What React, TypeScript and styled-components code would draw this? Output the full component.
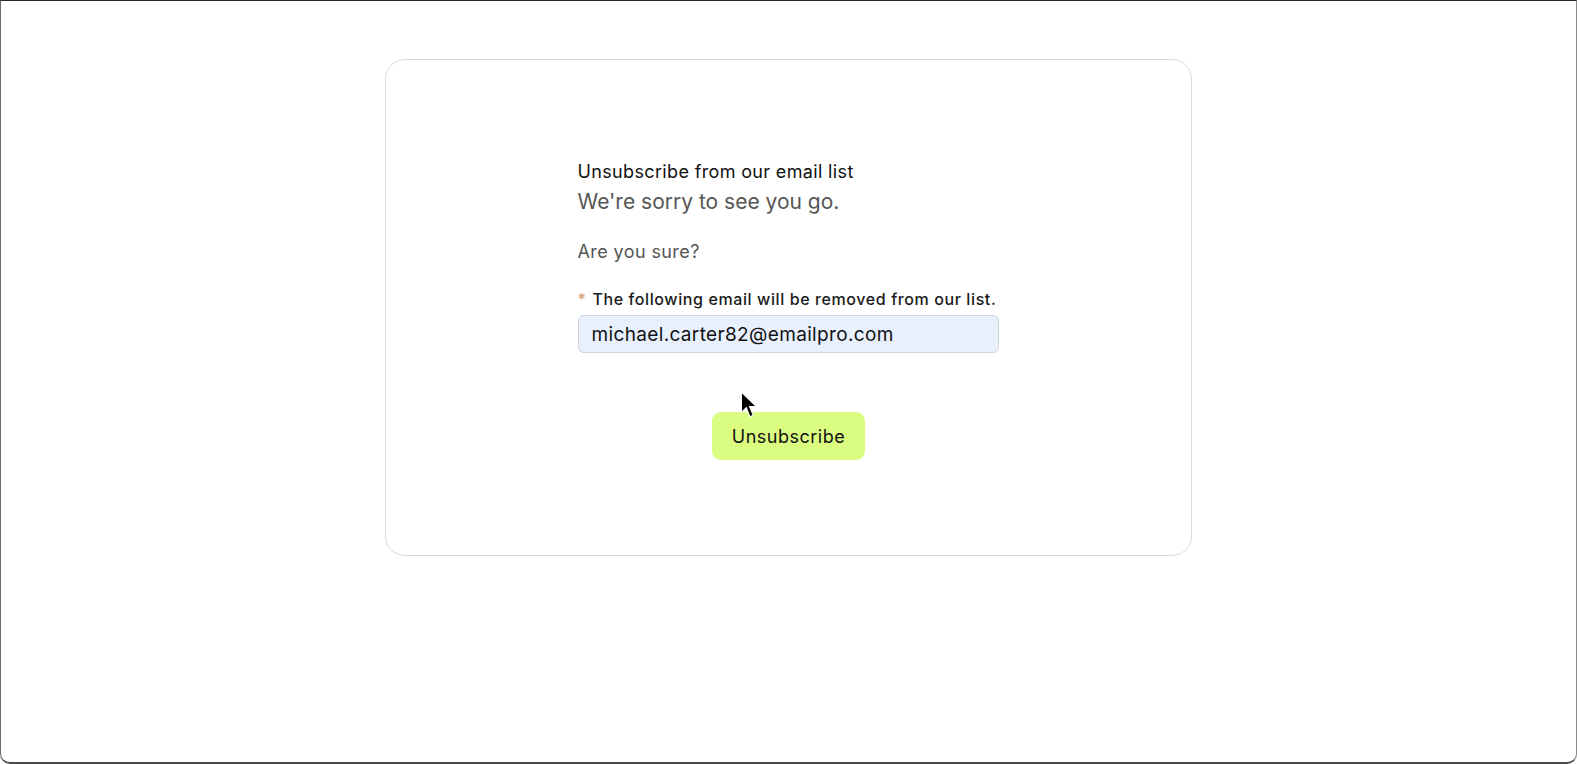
import React, { FC } from 'react';
import styled, { createGlobalStyle } from 'styled-components';

const GlobalStyle = createGlobalStyle`
  html, body {
    margin: 0;
    padding: 0;
    background: #ffffff;
  }
  body {
    font-family: Inter, "Noto Sans", "Liberation Sans", sans-serif;
  }
`;

const Frame = styled.div`
  position: relative;
  box-sizing: border-box;
  height: 764px;
  border-top: 1px solid #2b2b2b;
  border-right: 1px solid #8a8a8a;
  border-bottom: 2px solid #4a4a4a;
  border-left: 1px solid #6a6a6a;
  border-radius: 0 0 10px 10px;
  background: #ffffff;
  overflow: hidden;
`;

const Card = styled.div`
  box-sizing: border-box;
  width: 807px;
  height: 497px;
  margin: 58px auto 0 auto;
  padding-top: 100px;
  border: 1px solid #d9d9d9;
  border-radius: 20px;
`;

const Column = styled.div`
  width: 422px;
  margin: 0 auto;
  display: flex;
  flex-direction: column;
`;

const Title = styled.h1`
  margin: 0;
  font-size: 18px;
  font-weight: 400;
  line-height: 24px;
  letter-spacing: 0.35px;
  color: #111111;
`;

const Subtitle = styled.p`
  margin: 5px 0 0 0;
  font-size: 21px;
  font-weight: 400;
  line-height: 26px;
  color: #555555;
`;

const Question = styled.p`
  margin: 26px 0 0 0;
  font-size: 18px;
  line-height: 22px;
  letter-spacing: 0.4px;
  color: #555555;
`;

const Label = styled.label`
  margin-top: 26px;
  font-size: 16px;
  font-weight: 500;
  line-height: 20px;
  letter-spacing: 0.6px;
  white-space: nowrap;
  color: #1a1a1a;
`;

const Required = styled.span`
  color: #d2a07e;
  margin-right: 6px;
`;

const EmailInput = styled.input`
  box-sizing: border-box;
  width: 421px;
  height: 38px;
  margin-top: 6px;
  padding: 0 13px;
  border: 1px solid #cfd3da;
  border-radius: 6px;
  background: #e8f0fe;
  font-family: inherit;
  font-size: 19px;
  letter-spacing: 0.35px;
  color: #111111;
  outline: none;
`;

const ButtonRow = styled.div`
  display: flex;
  justify-content: center;
  margin-top: 59px;
`;

const Button = styled.button`
  box-sizing: border-box;
  width: 153px;
  height: 48px;
  border: none;
  border-radius: 9px;
  background: #dafc80;
  font-family: inherit;
  font-size: 18px;
  letter-spacing: 0.5px;
  color: #111111;
  cursor: pointer;
`;

const Cursor = styled.svg`
  position: absolute;
  left: 739px;
  top: 390px;
  width: 20px;
  height: 30px;
`;

const App: FC = () => {
  return (
    <>
      <GlobalStyle />
      <Frame>
        <Card>
          <Column>
            <Title>Unsubscribe from our email list</Title>
            <Subtitle>We're sorry to see you go.</Subtitle>
            <Question>Are you sure?</Question>
            <Label>
              <Required>*</Required>The following email will be removed from our list.
            </Label>
            <EmailInput type="email" defaultValue="michael.carter82@emailpro.com" />
          </Column>
          <ButtonRow>
            <Button>Unsubscribe</Button>
          </ButtonRow>
        </Card>
        <Cursor viewBox="0 0 18 28">
          <path d="M1 1 L1 20 L5.5 15.5 L9 24 L12 22.6 L8.6 14.5 L15 14.5 Z" fill="#000" stroke="#fff" strokeWidth="1" />
        </Cursor>
      </Frame>
    </>
  );
};

export default App;
